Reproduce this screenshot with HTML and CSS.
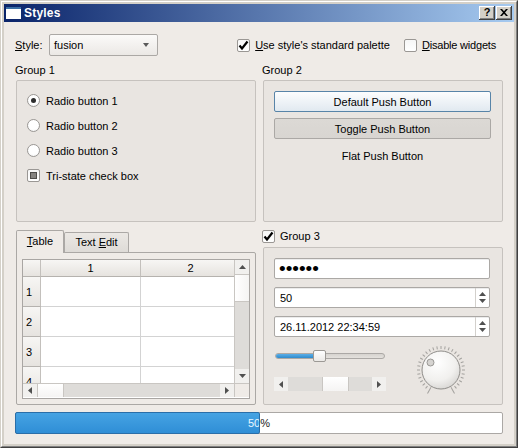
FILE: index.html
```html
<!DOCTYPE html>
<html>
<head>
<meta charset="utf-8">
<title>Styles</title>
<link rel="stylesheet" href="styles.css">
</head>
<body>
<div class="window">
  <div class="frame">
    <div class="titlebar">
      <svg class="app-icon" width="15" height="12" viewBox="0 0 15 12"><rect x="0" y="0" width="15" height="12" fill="#ffffff"/><rect x="0" y="0" width="15" height="2" fill="#3a6ea5"/></svg>
      <span class="title">Styles</span>
      <div class="tb-buttons">
        <span class="tb-btn">?</span>
        <span class="tb-btn"><svg width="8" height="7" viewBox="0 0 8 7"><path d="M0 0h2l2 2.2L6 0h2L5 3.5 8 7H6L4 4.8 2 7H0l3-3.5z" fill="#000"/></svg></span>
      </div>
    </div>
    <div class="client">
      <div class="toprow">
        <span class="style-label"><u>S</u>tyle:</span>
        <div class="combo"><span>fusion</span><span class="combo-arrow"></span></div>
        <div class="spacer"></div>
        <div class="check">
          <span class="box"><svg width="11" height="11" viewBox="0 0 11 11"><path d="M1.5 5.5 L4 8.5 L9.5 1.5" fill="none" stroke="#000" stroke-width="2.2"/></svg></span>
          <span><u>U</u>se style's standard palette</span>
        </div>
        <div class="check check-last">
          <span class="box"></span>
          <span class="tight"><u>D</u>isable widgets</span>
        </div>
      </div>

      <div class="groups">
        <section class="group">
          <div class="group-title">Group 1</div>
          <div class="group-frame g1">
            <div class="opt"><span class="radio on"></span><span>Radio button 1</span></div>
            <div class="opt"><span class="radio"></span><span>Radio button 2</span></div>
            <div class="opt"><span class="radio"></span><span>Radio button 3</span></div>
            <div class="opt"><span class="box tri"><span class="tri-mark"></span></span><span>Tri-state check box</span></div>
          </div>
        </section>

        <section class="group">
          <div class="group-title">Group 2</div>
          <div class="group-frame g2">
            <div class="btn default">Default Push Button</div>
            <div class="btn toggled">Toggle Push Button</div>
            <div class="btn flat">Flat Push Button</div>
          </div>
        </section>

        <section class="tabs">
          <div class="tabbar">
            <div class="tab active"><span><u>T</u>able</span></div>
            <div class="tab"><span>Text <u>E</u>dit</span></div>
          </div>
          <div class="pane">
            <div class="table">
              <div class="view">
                <div class="hd corner"></div>
                <div class="hd col">1</div>
                <div class="hd col">2</div>
                <div class="hd row">1</div><div class="cell"></div><div class="cell"></div>
                <div class="hd row">2</div><div class="cell"></div><div class="cell"></div>
                <div class="hd row">3</div><div class="cell"></div><div class="cell"></div>
                <div class="hd row">4</div><div class="cell"></div><div class="cell"></div>
              </div>
              <div class="vscroll">
                <span class="sb-btn v"><svg width="7" height="4" viewBox="0 0 7 4"><path d="M0 4L3.5 0L7 4Z" fill="#505050"/></svg></span>
                <span class="sb-handle v" style="height:28px"></span>
                <span class="sb-groove"></span>
                <span class="sb-btn v"><svg width="7" height="4" viewBox="0 0 7 4"><path d="M0 0L3.5 4L7 0Z" fill="#505050"/></svg></span>
              </div>
              <div class="hscroll">
                <span class="sb-btn h"><svg width="4" height="7" viewBox="0 0 4 7"><path d="M4 0L0 3.5L4 7Z" fill="#505050"/></svg></span>
                <span class="sb-handle h" style="width:27px"></span>
                <span class="sb-groove"></span>
                <span class="sb-btn h"><svg width="4" height="7" viewBox="0 0 4 7"><path d="M0 0L4 3.5L0 7Z" fill="#505050"/></svg></span>
              </div>
              <div class="sb-corner"></div>
            </div>
          </div>
        </section>

        <section class="group">
          <div class="group-title g3-title">
            <span class="box"><svg width="11" height="11" viewBox="0 0 11 11"><path d="M1.5 5.5 L4 8.5 L9.5 1.5" fill="none" stroke="#000" stroke-width="2.2"/></svg></span>
            <span>Group 3</span>
          </div>
          <div class="group-frame g3">
            <div class="field"><span class="dots">••••••</span></div>
            <div class="field spin"><span class="field-text">50</span>
              <span class="spin-btns">
                <svg width="7" height="4" viewBox="0 0 7 4"><path d="M0 4L3.5 0L7 4Z" fill="#505050"/></svg>
                <svg width="7" height="4" viewBox="0 0 7 4"><path d="M0 0L3.5 4L7 0Z" fill="#505050"/></svg>
              </span>
            </div>
            <div class="field spin"><span class="field-text">26.11.2012 22:34:59</span>
              <span class="spin-btns">
                <svg width="7" height="4" viewBox="0 0 7 4"><path d="M0 4L3.5 0L7 4Z" fill="#505050"/></svg>
                <svg width="7" height="4" viewBox="0 0 7 4"><path d="M0 0L3.5 4L7 0Z" fill="#505050"/></svg>
              </span>
            </div>
            <div class="g3-bottom">
              <div class="g3-left">
                <div class="slider">
                  <div class="groove"><div class="groove-fill" style="width:40px"></div></div>
                  <div class="slider-handle"></div>
                </div>
                <div class="hscroll small">
                  <span class="sb-btn h"><svg width="4" height="7" viewBox="0 0 4 7"><path d="M4 0L0 3.5L4 7Z" fill="#505050"/></svg></span>
                  <span class="sb-groove" style="flex:0 0 34px"></span>
                  <span class="sb-handle h" style="width:27px"></span>
                  <span class="sb-groove"></span>
                  <span class="sb-btn h"><svg width="4" height="7" viewBox="0 0 4 7"><path d="M0 0L4 3.5L0 7Z" fill="#505050"/></svg></span>
                </div>
              </div>
              <svg class="dial" width="60" height="60" viewBox="0 0 60 60">
                <defs>
                  <radialGradient id="dialg" cx="0.4" cy="0.3" r="0.8">
                    <stop offset="0" stop-color="#ffffff"/>
                    <stop offset="0.6" stop-color="#f1f0ee"/>
                    <stop offset="1" stop-color="#d2d0cd"/>
                  </radialGradient>
                </defs>
                <g stroke="#a3a19e" stroke-width="1">
                  <line x1="30" y1="3" x2="30" y2="10" transform="rotate(-150 30 30)"/>
                  <line x1="30" y1="6" x2="30" y2="9" transform="rotate(-140 30 30)"/>
                  <line x1="30" y1="6" x2="30" y2="9" transform="rotate(-130 30 30)"/>
                  <line x1="30" y1="6" x2="30" y2="9" transform="rotate(-120 30 30)"/>
                  <line x1="30" y1="6" x2="30" y2="9" transform="rotate(-110 30 30)"/>
                  <line x1="30" y1="6" x2="30" y2="9" transform="rotate(-100 30 30)"/>
                  <line x1="30" y1="6" x2="30" y2="9" transform="rotate(-90 30 30)"/>
                  <line x1="30" y1="6" x2="30" y2="9" transform="rotate(-80 30 30)"/>
                  <line x1="30" y1="6" x2="30" y2="9" transform="rotate(-70 30 30)"/>
                  <line x1="30" y1="6" x2="30" y2="9" transform="rotate(-60 30 30)"/>
                  <line x1="30" y1="6" x2="30" y2="9" transform="rotate(-50 30 30)"/>
                  <line x1="30" y1="6" x2="30" y2="9" transform="rotate(-40 30 30)"/>
                  <line x1="30" y1="6" x2="30" y2="9" transform="rotate(-30 30 30)"/>
                  <line x1="30" y1="6" x2="30" y2="9" transform="rotate(-20 30 30)"/>
                  <line x1="30" y1="6" x2="30" y2="9" transform="rotate(-10 30 30)"/>
                  <line x1="30" y1="6" x2="30" y2="9"/>
                  <line x1="30" y1="6" x2="30" y2="9" transform="rotate(10 30 30)"/>
                  <line x1="30" y1="6" x2="30" y2="9" transform="rotate(20 30 30)"/>
                  <line x1="30" y1="6" x2="30" y2="9" transform="rotate(30 30 30)"/>
                  <line x1="30" y1="6" x2="30" y2="9" transform="rotate(40 30 30)"/>
                  <line x1="30" y1="6" x2="30" y2="9" transform="rotate(50 30 30)"/>
                  <line x1="30" y1="6" x2="30" y2="9" transform="rotate(60 30 30)"/>
                  <line x1="30" y1="6" x2="30" y2="9" transform="rotate(70 30 30)"/>
                  <line x1="30" y1="6" x2="30" y2="9" transform="rotate(80 30 30)"/>
                  <line x1="30" y1="6" x2="30" y2="9" transform="rotate(90 30 30)"/>
                  <line x1="30" y1="6" x2="30" y2="9" transform="rotate(100 30 30)"/>
                  <line x1="30" y1="6" x2="30" y2="9" transform="rotate(110 30 30)"/>
                  <line x1="30" y1="6" x2="30" y2="9" transform="rotate(120 30 30)"/>
                  <line x1="30" y1="6" x2="30" y2="9" transform="rotate(130 30 30)"/>
                  <line x1="30" y1="6" x2="30" y2="9" transform="rotate(140 30 30)"/>
                  <line x1="30" y1="3" x2="30" y2="10" transform="rotate(150 30 30)"/>
                </g>
                <circle cx="30" cy="30" r="19" fill="url(#dialg)" stroke="#8f8d8a" stroke-width="1"/>
                <circle cx="19.5" cy="22.5" r="3.5" fill="#d6d4d1" stroke="#9a9895" stroke-width="1"/>
              </svg>
            </div>
          </div>
        </section>
      </div>

      <div class="progress">
        <div class="progress-text">50%</div>
        <div class="progress-chunk" style="width:50%">
          <div class="progress-text inner">50%</div>
        </div>
      </div>
    </div>
  </div>
</div>
</body>
</html>
```

FILE: styles.css
```css
* { box-sizing: border-box; }
html, body { margin: 0; padding: 0; }
body {
  width: 518px;
  height: 448px;
  overflow: hidden;
  font-family: "Liberation Sans", Arial, sans-serif;
  font-size: 11px;
  color: #000;
  background: #d4d0c8;
}
u { text-decoration: underline; text-underline-offset: 1px; }

.window {
  width: 518px;
  height: 448px;
  border: 1px solid;
  border-color: #d4d0c8 #404040 #404040 #d4d0c8;
}
.frame {
  height: 100%;
  border: 1px solid;
  border-color: #ffffff #808080 #808080 #ffffff;
  padding: 2px;
  background: #d4d0c8;
  display: flex;
  flex-direction: column;
}

/* title bar */
.titlebar {
  flex: none;
  height: 18px;
  display: flex;
  align-items: center;
  background: linear-gradient(to right, #0a246a, #a6caf0);
  color: #fff;
  padding-left: 2px;
}
.app-icon { display: block; }
.title { font-weight: bold; font-size: 12px; margin-left: 3px; letter-spacing: 0.2px; }
.tb-buttons { margin-left: auto; margin-right: 2px; display: flex; gap: 1px; }
.tb-btn {
  width: 16px;
  height: 14px;
  background: #d4d0c8;
  box-shadow: inset -1px -1px #404040, inset 1px 1px #ffffff, inset -2px -2px #808080;
  display: flex;
  align-items: center;
  justify-content: center;
  color: #000;
  font-weight: bold;
  font-size: 11px;
  line-height: 1;
  padding-bottom: 1px;
}

/* client */
.client {
  flex: 1;
  background: #efebe7;
  padding: 12px 11px 10px 11px;
  display: flex;
  flex-direction: column;
}
.toprow { flex: none; height: 22px; display: flex; align-items: center; padding-right: 7px; }
.style-label { width: 34px; }
.combo {
  width: 109px;
  height: 22px;
  border: 1px solid #aba8a5;
  border-radius: 2px;
  background: linear-gradient(#fbfaf9, #ebe8e5);
  display: flex;
  align-items: center;
  padding-left: 4px;
}
.combo-arrow {
  margin-left: auto;
  margin-right: 8px;
  width: 0;
  height: 0;
  border-left: 3.5px solid transparent;
  border-right: 3.5px solid transparent;
  border-top: 4px solid #5a5a5a;
}
.spacer { flex: 1; }
.check { display: flex; align-items: center; gap: 5px; }
.check-last { margin-left: 14px; }
.tight { letter-spacing: -0.2px; }
.box {
  flex: none;
  width: 13px;
  height: 13px;
  border: 1px solid #9a9794;
  border-radius: 2px;
  background: linear-gradient(#f6f6f6, #ffffff);
  display: flex;
  align-items: center;
  justify-content: center;
}
.box svg { display: block; }

/* grid of groups */
.groups {
  flex: none;
  margin-top: 7px;
  margin-left: 1px;
  display: grid;
  grid-template-columns: 240px 240px;
  grid-template-rows: 159px 176px;
  column-gap: 7px;
  row-gap: 7px;
}
.group { display: flex; flex-direction: column; }
.group-title { flex: none; height: 17px; line-height: 14px; margin-left: -1px; }
.group-frame {
  flex: 1;
  border: 1px solid #c6c2be;
  border-radius: 2px;
  background: #e9e5e1;
  display: flex;
  flex-direction: column;
}
.g1 { padding: 10px 10px 0 10px; gap: 6px; }
.opt { height: 19px; display: flex; align-items: center; gap: 6px; }
.radio {
  flex: none;
  width: 13px;
  height: 13px;
  border: 1px solid #9a9794;
  border-radius: 50%;
  background: radial-gradient(circle at 50% 40%, #ffffff 55%, #ebebeb 100%);
  display: flex;
  align-items: center;
  justify-content: center;
}
.radio.on::after {
  content: "";
  width: 5px;
  height: 5px;
  border-radius: 50%;
  background: #2e2e2e;
}
.tri-mark {
  width: 7px;
  height: 7px;
  background: #858380;
  border: 1px solid #4d4c4a;
}

.g2 { padding: 10px 11px 0 10px; gap: 6px; }
.btn {
  flex: none;
  height: 21px;
  border-radius: 2px;
  display: flex;
  align-items: center;
  justify-content: center;
}
.btn.default {
  border: 1px solid #5884a8;
  background: linear-gradient(#fcfdfe, #e1e9f0);
}
.btn.toggled {
  border: 1px solid #aba8a5;
  background: linear-gradient(#dcd9d5, #d8d5d1);
}

/* tabs */
.tabs { display: flex; flex-direction: column; }
.tabbar { flex: none; height: 23px; display: flex; align-items: flex-end; }
.tab {
  height: 20px;
  border: 1px solid #aba8a5;
  border-bottom: none;
  border-radius: 2px 2px 0 0;
  display: flex;
  align-items: center;
  justify-content: center;
  background: linear-gradient(#ebe8e4, #dedbd7);
  width: 65px;
  padding-bottom: 1px;
}
.tab.active {
  width: 48px;
  height: 23px;
  margin-bottom: -1px;
  background: #efebe7;
  position: relative;
  z-index: 1;
  padding-bottom: 3px;
}
.pane {
  flex: 1;
  border: 1px solid #aba8a5;
  border-radius: 0 2px 2px 2px;
  background: #efebe7;
  padding: 6px 5px 5px 5px;
  display: flex;
}

/* table */
.table {
  flex: 1;
  border: 1px solid #a9a6a3;
  background: #fff;
  display: grid;
  grid-template-columns: 211px 15px;
  grid-template-rows: 123px 14px;
  overflow: hidden;
}
.view {
  overflow: hidden;
  display: grid;
  grid-template-columns: 18px 100px 100px;
  grid-template-rows: 17px 30px 30px 30px 30px;
}
.hd {
  background: linear-gradient(#f7f6f4, #e6e3df);
  border-right: 1px solid #c3c0bc;
  border-bottom: 1px solid #b5b2ae;
  display: flex;
  align-items: center;
}
.hd.col { justify-content: center; }
.hd.row { padding-left: 3px; }
.cell { border-right: 1px solid #d3d3d3; border-bottom: 1px solid #d3d3d3; }

.vscroll {
  display: flex;
  flex-direction: column;
  background: #dedcd9;
  border-left: 1px solid #c9c6c2;
}
.hscroll {
  display: flex;
  background: #dedcd9;
  border-top: 1px solid #c9c6c2;
}
.sb-btn {
  flex: none;
  display: flex;
  align-items: center;
  justify-content: center;
  background: #f1f0ee;
}
.sb-btn.v { height: 14px; }
.sb-btn.h { width: 14px; }
.sb-btn svg { display: block; }
.sb-handle { flex: none; background: linear-gradient(#ffffff, #f5f4f3); }
.sb-handle.v { border-top: 1px solid #c9c6c2; border-bottom: 1px solid #c9c6c2; background: linear-gradient(to right, #ffffff, #f5f4f3); }
.sb-handle.h { border-left: 1px solid #c9c6c2; border-right: 1px solid #c9c6c2; }
.sb-groove { flex: 1; }
.sb-corner { background: #efebe7; border-top: 1px solid #c9c6c2; border-left: 1px solid #c9c6c2; }

/* group 3 */
.g3-title { display: flex; align-items: center; gap: 5px; height: 14px; margin-bottom: 4px; margin-top: 0; }
.g3 { padding: 10px 12px 0 10px; gap: 8px; }
.field {
  flex: none;
  height: 21px;
  border: 1px solid #aba8a5;
  border-radius: 2px;
  background: #fff;
  display: flex;
  align-items: center;
  box-shadow: inset 0 1px 0 #ececec;
}
.dots { font-size: 19px; line-height: 1; padding-left: 4px; letter-spacing: 0; margin-top: -1px; }
.field-text { padding-left: 5px; }
.spin-btns {
  margin-left: auto;
  width: 14px;
  height: 100%;
  border-left: 1px solid #d3d0cc;
  display: flex;
  flex-direction: column;
  align-items: center;
  justify-content: center;
  gap: 3px;
}
.spin-btns svg { display: block; }

.g3-bottom { flex: none; display: flex; margin-top: -5px; height: 60px; }
.g3-left { width: 112px; display: flex; flex-direction: column; padding-top: 7px; }
.slider { height: 18px; position: relative; margin-left: 1px; width: 110px; display: flex; align-items: center; }
.groove {
  width: 110px;
  height: 6px;
  border: 1px solid #aba8a5;
  border-radius: 3px;
  background: linear-gradient(#d6d3cf, #e4e1dd);
  overflow: hidden;
}
.groove-fill { height: 100%; background: linear-gradient(#5aaee8, #2f8bcc); }
.slider-handle {
  position: absolute;
  left: 38px;
  top: 3px;
  width: 13px;
  height: 12px;
  border: 1px solid #9c9995;
  border-radius: 2px;
  background: linear-gradient(#ffffff, #ebe9e6);
}
.hscroll.small {
  margin-top: 12px;
  height: 14px;
  border: none;
}
.dial { display: block; margin-left: 25px; }

/* progress */
.progress {
  flex: none;
  margin-top: 7px;
  height: 22px;
  border: 1px solid #aba8a5;
  border-radius: 2px;
  background: #fff;
  position: relative;
}
.progress-text {
  position: absolute;
  left: 0;
  top: 0;
  width: 486px;
  height: 100%;
  display: flex;
  align-items: center;
  justify-content: center;
  color: #1a1a1a;
}
.progress-chunk {
  box-sizing: content-box;
  position: absolute;
  left: -1px;
  top: -1px;
  bottom: -1px;
  border: 1px solid #2a6ea8;
  border-radius: 2px;
  background: linear-gradient(#46a3e3, #2f8ed6);
  overflow: hidden;
}
.progress-text.inner { color: #e8f6ff; }
```
